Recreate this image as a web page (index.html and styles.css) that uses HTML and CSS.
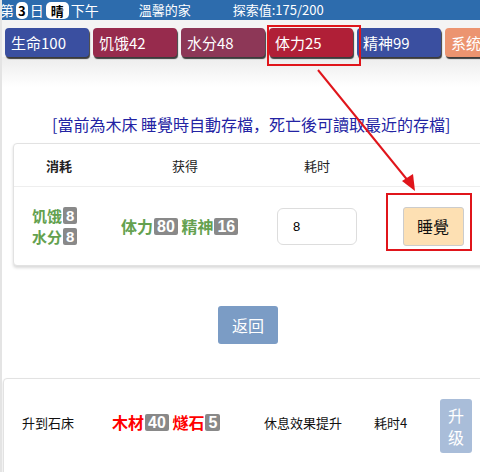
FILE: index.html
```html
<!DOCTYPE html>
<html lang="zh">
<head>
  <meta charset="UTF-8">
  <title>溫馨的家</title>
  <link rel="stylesheet" href="styles.css">
</head>
<body>
  <div class="page">
    <!-- top status bar -->
    <div class="topbar">
      <span>第<b class="chip">3</b>日<b class="chip wide">晴</b>下午</span>
      <span class="place">溫馨的家</span>
      <span class="explore">探索值:175/200</span>
    </div>

    <!-- attribute buttons -->
    <div class="stats">
      <div class="stat blue">生命100</div>
      <div class="stat wine">饥饿42</div>
      <div class="stat plum">水分48</div>
      <div class="stat red">体力25</div>
      <div class="stat blue">精神99</div>
      <div class="stat orange">系统</div>
    </div>
    <div class="fade"></div>

    <p class="notice">[當前為木床 睡覺時自動存檔，死亡後可讀取最近的存檔]</p>

    <div class="card">
      <div class="row head">
        <div class="c1"><b>消耗</b></div>
        <div class="c2">获得</div>
        <div class="c3">耗时</div>
        <div class="c4"></div>
      </div>
      <div class="row body">
        <div class="c1 green">
          <div class="line">饥饿<span class="num">8</span></div>
          <div class="line">水分<span class="num">8</span></div>
        </div>
        <div class="c2 green">体力<span class="num">80</span> 精神<span class="num">16</span></div>
        <div class="c3"><input class="hours" type="text" value="8"></div>
        <div class="c4"><button class="sleep">睡覺</button></div>
      </div>
    </div>

    <div class="back-wrap">
      <button class="back">返回</button>
    </div>

    <div class="card upgrade">
      <div class="u-name">升到石床</div>
      <div class="u-cost">木材<span class="num">40</span> 燧石<span class="num">5</span></div>
      <div class="u-desc">休息效果提升</div>
      <div class="u-time">耗时4</div>
      <button class="u-btn">升<br>级</button>
    </div>

    <!-- annotation overlay -->
    <div class="mark mark-stat"></div>
    <div class="mark mark-sleep"></div>
    <svg class="arrow" width="480" height="472" viewBox="0 0 480 472">
      <line x1="318" y1="70" x2="409" y2="182" stroke="#e0151b" stroke-width="2"/>
      <polygon points="415,191 402,181 413,174" fill="#e0151b"/>
      <rect x="316" y="64" width="3" height="2" fill="#e0151b"/>
    </svg>
  </div>
</body>
</html>
```

FILE: styles.css
```css
body {
  margin: 0;
  font-family: "Noto Sans CJK SC", "Noto Sans", sans-serif;
  background: #fff;
  overflow: hidden;
}
.page {
  position: relative;
  width: 480px;
  height: 472px;
  overflow: hidden;
  border-left: 2px solid #e4e4e4;
  box-sizing: border-box;
}
.topbar {
  height: 20px;
  background: #2d6cad;
  color: #fff;
  font-size: 14px;
  line-height: 20px;
  display: flex;
  margin-left: -2px;
  white-space: nowrap;
}
.chip {
  display: inline-block;
  background: #fff;
  color: #000;
  border-radius: 5px;
  padding: 0 2px;
  margin: 0 2px;
  line-height: 17px;
  font-size: 13px;
}
.chip.wide {
  padding: 0 5px;
}
.place {
  margin-left: 40px;
  font-size: 13px;
}
.explore {
  margin-left: 42px;
  font-size: 13px;
}
.stats {
  display: flex;
  gap: 4px;
  padding: 8px 0 0 3px;
  background: #f4f4f4;
  white-space: nowrap;
}
.stat {
  flex: 0 0 84px;
  height: 29px;
  line-height: 29px;
  color: #fff;
  font-size: 15px;
  padding-left: 6px;
  box-sizing: border-box;
  border-radius: 4px;
  box-shadow: 1px 2px 1px rgba(0, 0, 0, 0.75);
}
.stat.blue { background: #3a4fa0; }
.stat.wine { background: #972b4d; }
.stat.plum { background: #8d3757; }
.stat.red { background: #b01f37; }
.stat.orange { background: #ec9470; flex-basis: 60px; }
.fade {
  height: 30px;
  background: linear-gradient(#ececec, #fff);
}
.notice {
  margin: 26px 0 0 50px;
  color: #2323a3;
  font-size: 16px;
  line-height: 23px;
  white-space: nowrap;
}
.card {
  margin: 7px -20px 0 11px;
  border: 1px solid #e2e2e2;
  border-radius: 4px;
  box-shadow: 0 2px 3px rgba(0, 0, 0, 0.15);
  background: #fff;
}
.row {
  display: flex;
  align-items: center;
}
.row.head {
  height: 42px;
  font-size: 13px;
  color: #222;
  border-bottom: 1px solid #eee;
}
.row.body {
  height: 78px;
  font-size: 16px;
}
.c1 { width: 90px; text-align: center; }
.c2 { width: 162px; text-align: center; }
.c3 { width: 102px; text-align: center; }
.c4 { width: 130px; text-align: center; }
.row.body .c1 {
  text-align: left;
  padding-left: 18px;
  width: 72px;
}
.line {
  font-size: 15px;
  height: 21px;
  line-height: 21px;
}
.line .num {
  font-size: 15px;
}
.row.body .c2 {
  text-align: left;
  padding-left: 17px;
  width: 145px;
}
.green {
  color: #64a14f;
  font-weight: bold;
}
.num {
  display: inline-block;
  background: #898989;
  color: #fff;
  font-family: "Liberation Sans", sans-serif;
  font-weight: bold;
  font-size: 16px;
  line-height: 17px;
  padding: 0 3px;
  border-radius: 2px;
  margin-left: 1px;
  vertical-align: 1px;
}
.hours {
  width: 80px;
  height: 37px;
  box-sizing: border-box;
  border: 1px solid #ddd;
  border-radius: 6px;
  padding: 0 15px;
  font-size: 13px;
  font-family: "Liberation Sans", sans-serif;
}
.sleep {
  width: 61px;
  height: 39px;
  background: #fde0b3;
  border: 1px solid #ccc;
  border-radius: 3px;
  font-size: 16px;
  font-family: inherit;
  color: #111;
}
.back-wrap {
  padding-top: 40px;
  padding-left: 216px;
}
.back {
  width: 60px;
  height: 38px;
  background: #7b9cc5;
  color: #fff;
  border: none;
  border-radius: 3px;
  font-size: 16px;
  font-family: inherit;
}
.upgrade {
  margin: 34px -20px 0 1px;
  height: 100px;
  box-sizing: border-box;
  padding-top: 20px;
  display: flex;
  align-items: flex-start;
  font-size: 13px;
  color: #111;
}
.u-name, .u-desc, .u-time {
  margin-top: 14px;
}
.u-name { margin-left: 18px; width: 90px; }
.u-cost {
  color: #ff0000;
  font-weight: bold;
  font-size: 16px;
  width: 152px;
  margin-top: 11px;
}
.u-desc { width: 110px; }
.u-time { width: 66px; }
.u-btn {
  width: 32px;
  height: 54px;
  background: #a9bdd9;
  color: #fff;
  border: none;
  border-radius: 3px;
  font-size: 16px;
  font-family: inherit;
  line-height: 22px;
  padding: 0;
}
.mark {
  position: absolute;
  border: 2px solid #e0151b;
}
.mark-stat {
  left: 265px;
  top: 25px;
  width: 90px;
  height: 37px;
}
.mark-sleep {
  left: 384px;
  top: 193px;
  width: 82px;
  height: 54px;
}
.arrow {
  position: absolute;
  left: -2px;
  top: 0;
}
```
